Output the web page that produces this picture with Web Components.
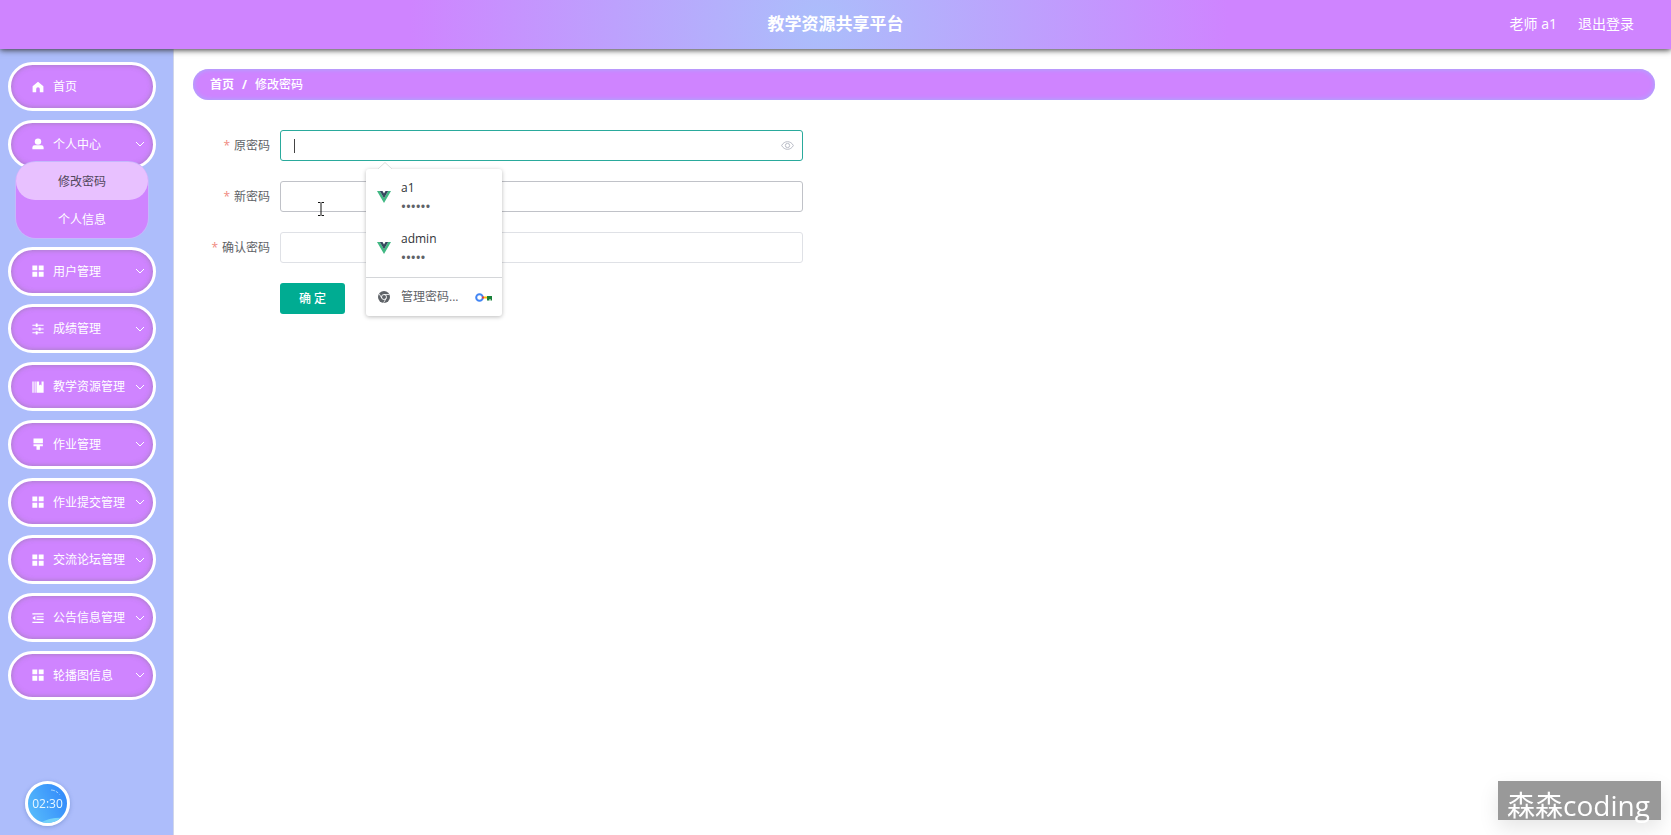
<!DOCTYPE html>
<html lang="zh-CN">
<head>
<meta charset="utf-8">
<title>教学资源共享平台</title>
<style>
  html, body { margin: 0; height: 100%; }
  body {
    --purple: #cf84ff; --blue: #adbdfb; --teal: #00ac92;
    font: 12px/16px "Open Sans", "Noto Sans CJK SC", sans-serif;
    color: #606266; background: #fff;
  }
</style>
</head>
<body>
<app-shell>
  <app-header slot="header" heading="教学资源共享平台"></app-header>
  <side-nav slot="nav">
    <nav-item icon="home" label="首页"></nav-item>
    <nav-item icon="user" label="个人中心" expandable>
      <sub-item active>修改密码</sub-item>
      <sub-item>个人信息</sub-item>
    </nav-item>
    <nav-item icon="menu" label="用户管理" expandable></nav-item>
    <nav-item icon="operation" label="成绩管理" expandable></nav-item>
    <nav-item icon="management" label="教学资源管理" expandable></nav-item>
    <nav-item icon="brush" label="作业管理" expandable></nav-item>
    <nav-item icon="menu" label="作业提交管理" expandable></nav-item>
    <nav-item icon="menu" label="交流论坛管理" expandable></nav-item>
    <nav-item icon="fold" label="公告信息管理" expandable></nav-item>
    <nav-item icon="menu" label="轮播图信息" expandable></nav-item>
  </side-nav>
  <bread-crumb></bread-crumb>
  <password-form></password-form>
</app-shell>
<clock-badge>02:30</clock-badge>
<water-mark>森森coding</water-mark>

<script>
const define = (name, html, setup) => customElements.define(name, class extends HTMLElement {
  constructor() {
    super();
    this.attachShadow({ mode: 'open' });
  }
  connectedCallback() {
    const t = document.createElement('template');
    t.innerHTML = html;
    this.shadowRoot.replaceChildren(t.content.cloneNode(true));
    if (setup) setup(this, this.shadowRoot);
  }
});

const icons = {
  home: '<path d="M8 1 15.200 7v8h-4.800V10.800a2.400 2.400 0 0 0-4.800 0V15H.8V7z"/>',
  user: '<circle cx="8" cy="4.800" r="4.300"/><path d="M.5 15v-2.200a3 3 0 0 1 3-3h9a3 3 0 0 1 3 3V15z"/>',
  menu: '<path d="M.5.5h6.500v6.500H.5zM9 .5h6.500v6.500H9zM.5 9h6.500v6.500H.5zM9 9h6.500v6.500H9z"/>',
  operation: '<path d="M.5 2.200H5V.8h2.500v1.400h8v1.500h-8v1.500H5V3.700H.5zM.5 7.300H9V5.900h2.500v1.400h4v1.500h-4v1.500H9V8.800H.5zM.5 12.300H5v-1.400h2.500v1.400h8v1.500h-8v1.500H5v-1.500H.5z"/>',
  management: '<path d="M.5.5h1.700v15H.5zM3.400.5h1.500v15H3.400zM6 .5h3.500v5.500l1.600-1.300 1.600 1.300V.5h2.800v15H6z"/>',
  brush: '<path d="M2 .8h12.500v6.200H2zM2 8.200h12.500V11H10.500v4.500H6V11H2z"/>',
  fold: '<path d="M.5 1.500h15v1.700H.5zM6 5.500h9.500v1.600H6zM6 9h9.500v1.600H6zM.5 12.900h15v1.700H.5zM.5 8l4-3v6z"/>'
};

define('app-shell', `
<style>
  :host { display: grid; grid-template: auto 1fr / 174px 1fr; min-height: 100vh; }
  header { grid-column: 1 / 3; z-index: 1; }
  aside { background: var(--blue); box-sizing: border-box; padding: 13px 17px 0 8px; border-right: 1px solid #d0d6ea; }
  main { padding: 20px 16px 0 19px; }
</style>
<header><slot name="header"></slot></header>
<aside><slot name="nav"></slot></aside>
<main><slot></slot></main>`);

define('app-header', `
<style>
  :host { display: grid; grid-template-columns: 1fr auto 1fr; align-items: center; box-sizing: border-box; height: 49px; padding: 0 37px 2px;
    color: #fff; background: radial-gradient(circle at 49% 50%, #abbefb 0, #cf84ff 48%);
    box-shadow: 0 1px 6px #333; }
  h1 { grid-column: 2; margin: 0; font-size: 17px; line-height: 24px; font-weight: 700; }
  div { display: flex; justify-content: flex-end; gap: 21px; font-size: 14px; line-height: 20px; }
  a { color: inherit; text-decoration: none; }
</style>
<h1></h1><div><span>老师 a1</span><a href="#logout">退出登录</a></div>`,
(el, root) => { root.querySelector('h1').textContent = el.getAttribute('heading'); });

define('side-nav', `
<style>
  :host { display: block; }
  nav { display: flex; flex-direction: column; justify-content: space-between; min-height: 638px; }
</style>
<nav aria-label="主导航"><slot></slot></nav>`);

define('nav-item', `
<style>
  :host { display: block; color: #fff; }
  button { display: flex; align-items: center; width: 100%; height: 49px; box-sizing: border-box; margin: 0;
    padding: 0 8px 0 21px; border: 3px solid #fff; border-radius: 25px; background: var(--purple);
    box-shadow: inset 0 0 5px #7778; color: inherit; font: inherit; text-align: left; }
  .icon { width: 12px; height: 12px; margin-right: 9px; fill: currentColor; flex: none; }
  span { flex: 1; white-space: nowrap; padding-top: 1px; }
  .arrow { width: 10px; height: 10px; fill: none; stroke: #fff; stroke-width: 1; flex: none; }
  .sub { display: flex; flex-direction: column; position: relative; margin: -7px 8px 0; border-radius: 20px;
    background: var(--purple); box-shadow: 0 0 0 1px #c5b7fc; }
</style>
<button type="button"><svg class="icon" viewBox="0 0 16 16"></svg><span></span></button>`,
(el, root) => {
  root.querySelector('.icon').innerHTML = icons[el.getAttribute('icon')];
  root.querySelector('span').textContent = el.getAttribute('label');
  if (el.hasAttribute('expandable'))
    root.querySelector('button').insertAdjacentHTML('beforeend', '<svg class="arrow" viewBox="0 0 10 10"><path d="M1 3l4 4 4-4"/></svg>');
  if (el.children.length)
    root.querySelector('button').insertAdjacentHTML('afterend', '<div class="sub"><slot></slot></div>');
});

define('sub-item', `
<style>
  :host { display: block; }
  a { display: block; padding: 12px 0 10px; line-height: 16px; border-radius: 20px; text-align: center; color: #fff; text-decoration: none; }
  :host([active]) a { background: #e8c1ff; color: #51465c; }
</style>
<a href="#"><slot></slot></a>`);

define('bread-crumb', `
<style>
  :host { display: block; }
  ol { display: flex; gap: 8px; margin: 0; padding: 0 17px; height: 31px; align-items: center; list-style: none;
    border-radius: 16px; background: var(--purple); box-shadow: inset 0 0 5px #9db4fb; color: #fff; }
  a { color: inherit; font-weight: 700; text-decoration: none; }
  li { font-weight: 500; }
  .sep { font-weight: 700; }
</style>
<ol><li><a href="#home">首页</a></li><li class="sep" aria-hidden="true">/</li><li>修改密码</li></ol>`);

define('password-form', `
<style>
  :host { display: block; max-width: 610px; margin-top: 30px; }
  form { display: grid; gap: 20px; }
  .actions { padding-left: 87px; }
  button { height: 31px; width: 65px; padding: 0; border: 0; border-radius: 3px; background: var(--teal);
    color: #fff; font: inherit; font-weight: 500; }
</style>
<form>
  <form-field label="原密码" state="focus"></form-field>
  <form-field label="新密码" state="hover"></form-field>
  <form-field label="确认密码"></form-field>
  <div class="actions"><button type="button">确 定</button></div>
</form>`);

define('form-field', `
<style>
  :host { display: grid; grid-template-columns: 77px 1fr; column-gap: 10px; align-items: center; position: relative; }
  label { text-align: right; }
  label::before { content: "*"; color: #f08a80; margin-right: 4px; }
  .box { display: flex; align-items: center; box-sizing: border-box; height: 31px; padding: 0 8px 0 13px;
    border: 1px solid #dfe1e6; border-radius: 3px; background: #fff; }
  :host([state=hover]) .box { border-color: #c0c2c8; }
  :host([state=focus]) .box { border-color: #2aaa9c; }
  input { flex: 1; min-width: 0; border: 0; outline: 0; padding: 0; background: none; font: inherit; }
  .caret { width: 1px; height: 14px; background: #444; }
  .eye { width: 13px; height: 13px; fill: none; stroke: #b4b8c2; }
  autofill-popup { position: absolute; top: 39px; left: 173px; z-index: 2; }
  .cursor { position: absolute; left: 124px; top: 20px; width: 8px; height: 16px; z-index: 1; }
</style>
<label for="field"></label>
<div class="box"><input id="field" type="password"></div>`,
(el, root) => {
  const state = el.getAttribute('state');
  root.querySelector('label').textContent = el.getAttribute('label');
  if (state === 'focus') {
    root.querySelector('input').insertAdjacentHTML('beforebegin', '<i class="caret"></i>');
    root.querySelector('input').insertAdjacentHTML('afterend', '<svg class="eye" viewBox="0 0 14 14"><path d="M.7 7C3.500 1.500 10.500 1.500 13.300 7 10.500 12.500 3.500 12.500.7 7z"/><circle cx="7" cy="7" r="2.300"/></svg>');
    root.querySelector('.box').insertAdjacentHTML('afterend', '<autofill-popup></autofill-popup>');
  }
  if (state === 'hover')
    root.querySelector('.box').insertAdjacentHTML('afterend', '<svg class="cursor" viewBox="0 0 8 16" fill="none" stroke="#111"><path d="M1 1.500h2.500M4.500 1.500H7M1 14.500h2.500M4.500 14.500H7M4 2v12"/></svg>');
});

define('autofill-popup', `
<style>
  :host { display: block; width: 136px; border-radius: 3px; background: #fff; color: #303338; box-shadow: 0 1px 4px #0004; }
  .tip { position: absolute; left: 12px; top: -7px; width: 14px; height: 7px; fill: #fff; stroke: #ddd; stroke-width: 1; }
  ul { margin: 0; padding: 6px 0 7px; list-style: none; }
  li { display: grid; grid-template-columns: 14px 1fr; gap: 10px; align-items: center; padding: 0 11px; height: 44px; }
  li + li { margin-top: 7px; }
  .text { display: grid; row-gap: 2px; }
  .dots { color: #5f6368; font-size: 13px; font-weight: 600; }
  svg.vue { width: 14px; height: 12px; }
  footer { display: flex; align-items: center; border-top: 1px solid #d4d6d9; height: 38px; padding: 0 10px 0 11px; color: #5f6368; }
  footer a { flex: 1; margin-left: 11px; color: inherit; text-decoration: none; }
  .chrome { width: 12px; height: 12px; margin-left: 1px; }
  .key { width: 17px; height: 9px; }
</style>
<svg class="tip" viewBox="0 0 14 7"><path d="M0 7l7-6.500L14 7"/></svg>
<ul>
  <li><svg class="vue" viewBox="0 0 14 12"><path fill="#41b883" d="M0 0h2.800L7 7.200 11.200 0H14L7 12z"/><path fill="#35495e" d="M2.800 0h2.700L7 2.600 8.500 0h2.700L7 7.200z"/></svg><div class="text"><span>a1</span><span class="dots">••••••</span></div></li>
  <li><svg class="vue" viewBox="0 0 14 12"><path fill="#41b883" d="M0 0h2.800L7 7.200 11.200 0H14L7 12z"/><path fill="#35495e" d="M2.800 0h2.700L7 2.600 8.500 0h2.700L7 7.200z"/></svg><div class="text"><span>admin</span><span class="dots">•••••</span></div></li>
</ul>
<footer>
  <svg class="chrome" viewBox="0 0 12 12"><circle cx="6" cy="6" r="6" fill="#5f6368"/><circle cx="6" cy="6" r="2.500" fill="#5f6368" stroke="#fff" stroke-width=".9"/><path d="M6 3.500h5.300M3.800 7.200 1.200 2.800M8.200 7.200 5.600 11.800" stroke="#fff" stroke-width=".8"/></svg>
  <a href="#passwords">管理密码...</a>
  <svg class="key" viewBox="0 0 17 9"><circle cx="4.500" cy="4.500" r="3.300" fill="none" stroke="#4285f4" stroke-width="2"/><path fill="#ea4335" d="M7 3.500h2v2H7z"/><path fill="#fbbc04" d="M9 3.500h3v2H9z"/><path fill="#188038" d="M12 3h5v4.500h-1.500V6h-1v1.500H12z"/></svg>
</footer>`);

define('clock-badge', `
<style>
  :host { position: fixed; left: 25px; bottom: 9px; display: grid; place-items: center; box-sizing: border-box; width: 45px; height: 45px;
    border: 3px solid #fff; border-radius: 50%; overflow: hidden; color: #e8f8ff; box-shadow: 0 1px 4px #4466aa66;
    background: linear-gradient(65deg, #5ac0fb, #2f84fb); z-index: 3; }
  svg { position: absolute; inset: 0; width: 39px; height: 39px; fill: none; }
  time { position: relative; }
</style>
<svg viewBox="0 0 39 39"><path d="M23 6q5 0 9 5" stroke="#a5d6ff" stroke-dasharray="4 1 3 2"/><path d="M12 39q10-6 25-5v5z" fill="#74d2f8"/></svg>
<time><slot></slot></time>`);

define('water-mark', `
<style>
  :host { position: fixed; right: 10px; bottom: 15px; box-sizing: border-box; width: 163px; height: 39px; padding: 5px 9px 0;
    background: #999; color: #fff; font-size: 28px; line-height: 38px; white-space: nowrap; box-shadow: 0 8px 20px #0000001a; }
</style>
<slot></slot>`);
</script>
</body>
</html>
